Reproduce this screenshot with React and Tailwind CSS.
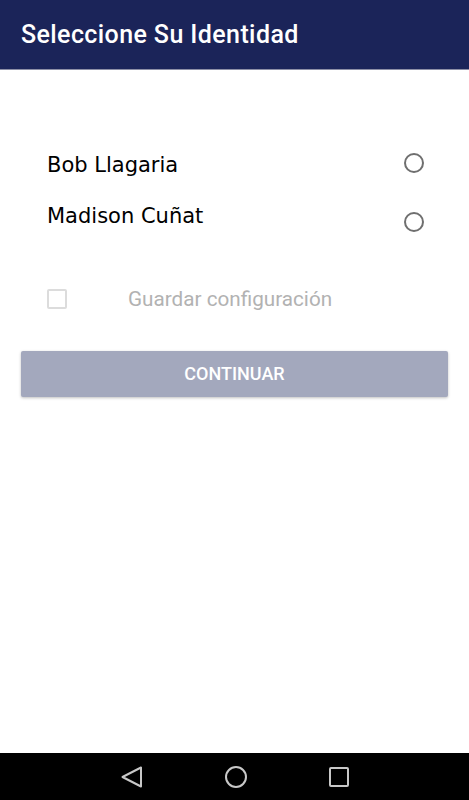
export default function App() {
  return (
    <div className="flex h-[800px] w-[469px] flex-col bg-white" style={{ fontFamily: "Roboto, sans-serif" }}>
      <header className="flex h-[69px] items-center bg-[#1b2459] pl-[21px]">
        <h1 className="text-[25px] font-medium leading-none tracking-[0.4px] text-white" style={{ fontFamily: "Roboto, sans-serif" }}>
          Seleccione Su Identidad
        </h1>
      </header>
      <div className="h-px bg-[#8d8fa6]" />
      <main className="flex flex-1 flex-col">
        <div className="flex flex-col pl-[47px] pr-[45px] pt-[80px]">
          <div className="flex h-[30px] items-center justify-between">
            <span className="text-[21px] leading-none text-black" style={{ fontFamily: '"DejaVu Sans", sans-serif' }}>
              Bob Llagaria
            </span>
            <span className="mb-[4px] h-[20px] w-[20px] rounded-full border-2 border-[#6f6f6f]" />
          </div>
          <div className="mt-[26px] flex h-[40px] items-start justify-between">
            <span className="text-[21px] leading-none text-black" style={{ fontFamily: '"DejaVu Sans", sans-serif' }}>
              Madison Cuñat
            </span>
            <span className="mt-[6px] h-[20px] w-[20px] rounded-full border-2 border-[#6f6f6f]" />
          </div>
        </div>
        <div className="mt-[43px] flex items-center pl-[47px]">
          <span className="h-[20px] w-[20px] rounded-[2px] border-2 border-[#dcdcdc]" />
          <span className="ml-[61px] text-[20.7px] leading-none text-[#b2b2b2]">Guardar configuración</span>
        </div>
        <div className="mx-[21px] mt-[41px]">
          <button className="flex h-[46px] w-full items-center justify-center rounded-[2px] bg-[#a3a8bd] text-[18px] font-medium text-white shadow-[0_1px_3px_rgba(0,0,0,0.25)]">
            CONTINUAR
          </button>
        </div>
      </main>
      <nav className="flex h-[47px] items-center justify-center gap-[82px] bg-black">
        <svg width="22" height="22" viewBox="0 0 22 22">
          <path d="M20 1.5 L20 20.5 L1.5 11 Z" fill="none" stroke="#c8c8c8" strokeWidth="2" strokeLinejoin="round" />
        </svg>
        <svg width="22" height="22" viewBox="0 0 22 22">
          <circle cx="11" cy="11" r="10" fill="none" stroke="#c8c8c8" strokeWidth="2" />
        </svg>
        <svg width="20" height="20" viewBox="0 0 20 20">
          <rect x="1" y="1" width="18" height="18" rx="1" fill="none" stroke="#c8c8c8" strokeWidth="2" />
        </svg>
      </nav>
    </div>
  );
}
